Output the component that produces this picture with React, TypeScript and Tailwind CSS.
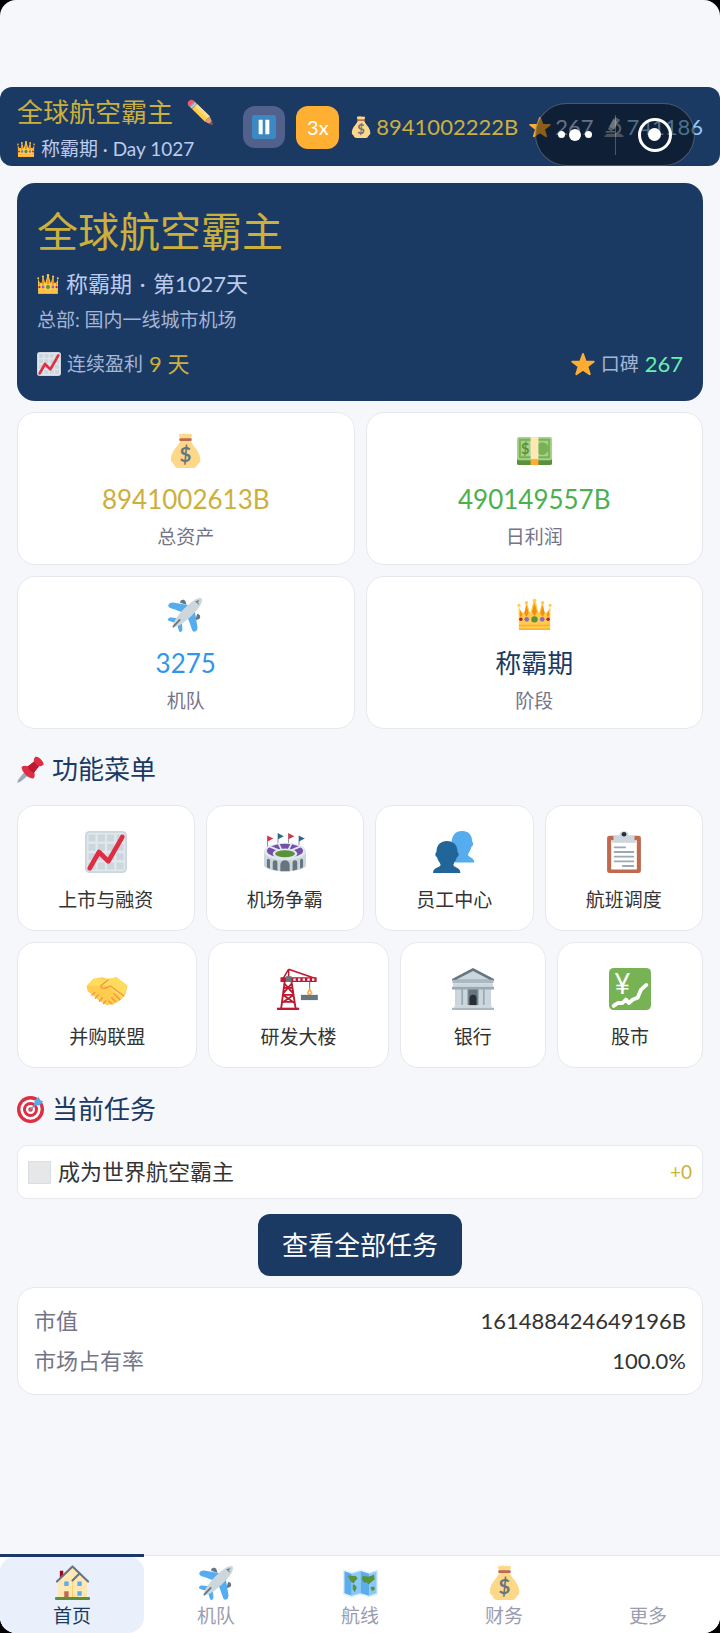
import type { ReactNode } from 'react'
import clsx from 'clsx'

const art: Record<string, ReactNode> = {
    crown: (
        <>
            <path fill="#FFCC4D" d="M1.500 8.500L5 19l3-1L9 7h1.500l3 10L17 4h2l3.500 13 3-10H27l1 11 3 1 3.500-10.500L34 34H2z" />
            <path fill="#FFCC4D" d="M2.500 16h31v10h-31z" />
            <path fill="#F4900C" d="M9.700 8l2.300 8.500-2.300 4-2.300-4zM18 6l2.600 9.500-2.600 4.500-2.600-4.500zM26.300 8l2.300 8.500-2.300 4-2.300-4zM3.500 13l2 5-1.500 3-1.300-3zM32.500 13l-2 5 1.500 3 1.300-3z" />
            <circle cx="18" cy="3.800" r="2" fill="#FFCC4D" />
            <circle cx="9.700" cy="6" r="1.800" fill="#FFCC4D" />
            <circle cx="26.300" cy="6" r="1.800" fill="#FFCC4D" />
            <circle cx="2" cy="8.500" r="1.600" fill="#FFCC4D" />
            <circle cx="34" cy="8.500" r="1.600" fill="#FFCC4D" />
            <path fill="#FFAC33" d="M2 28.500h32V30H2zM2 32.500h32V34H2z" />
            <circle cx="18" cy="23" r="3.300" fill="#5C913B" />
            <circle cx="10" cy="23" r="2.400" fill="#9266CC" />
            <circle cx="26" cy="23" r="2.400" fill="#9266CC" />
            <circle cx="4" cy="23" r="1.800" fill="#BE1931" />
            <circle cx="32" cy="23" r="1.800" fill="#BE1931" />
        </>
    ),
    pencil: (
        <>
            <path fill="#EA596E" d="M1.500 8.500C.5 6 1 4 2.800 2.500S7 .700 9 2l2.500 2.500-7 7z" />
            <path fill="#99AAB5" d="M3.500 10.500l7-7 3.500 3.500-7 7z" />
            <path fill="#CCD6DD" d="M5 12l7-7 .8.8-7 7z" />
            <path fill="#FFCC4D" d="M7 14l7-7 17.500 17L24.500 31z" />
            <path fill="#FFD983" d="M10.500 10.500L14 7l17.500 17-3.500 3.500z" />
            <path fill="#D99E82" d="M24.500 31l2-3 2-2 3-2 4 9.500c.3 1.500-.6 2.300-2 2z" />
            <path fill="#662113" d="M33.500 35.500l-3-1.200 4-4 1.100 3.200c.3 1.500-.6 2.300-2.100 2z" opacity=".65" />
        </>
    ),
    pause: (
        <>
            <rect width="36" height="36" rx="4" fill="#3B88C3" />
            <path fill="#fff" d="M10 7h6v22h-6zM20 7h6v22h-6z" />
        </>
    ),
    bag: (
        <>
            <path fill="#FDD888" d="M31.900 21.500C30.500 17 24 11.500 23.500 8h-11C12 11.500 5.500 17 4.100 21.500c-.9 2-1.300 4.500-1.100 7 .3 1.500 2.500 2.500 3 4 .6 2 1.500 3 4 3.500h16c2.500 0 3.500-1.500 4.500-3.500.6-1.500 2.500-2 2.700-4 .2-2.500-.4-5-1.300-7z" />
            <path fill="#FDD888" d="M11.500 1.500c1-1.500 2.500.3 3.500-.5s2-1 3 0 2.500-.8 3.500 0 2.500-.5 3 .5-.9 3.500-1.200 5H12.700c-.3-1.500-1.700-3.500-1.200-5z" />
            <rect x="11.500" y="5.500" width="13" height="2.800" rx="1.400" fill="#BF6952" />
            <text x="18" y="29.500" textAnchor="middle" fontSize="21" fontFamily="Lato, sans-serif" fontWeight="700" fill="#67757F">$</text>
        </>
    ),
    star: (
        <path fill="#FFAC33" stroke="#FFAC33" strokeWidth="3" strokeLinejoin="round" d="M18 3l4 11.200 12 .3-9.500 7.300L28 33.200l-10-6.800-10 6.800 3.500-11.400L2 14.500l12-.3z" />
    ),
    microscope: (
        <>
            <path fill="#8899A6" d="M4 30h28v3H4zM1 33h34v3H1z" />
            <path fill="none" stroke="#99AAB5" strokeWidth="4" d="M24 13c8 4 7 15-4 18" />
            <path fill="#CCD6DD" d="M17 3l9 5-8 15-9-5z" />
            <path fill="#99AAB5" d="M20 0l9 5-2 4-9-5zM9 18l7 4-2 4-7-4zM3 25h17v3H3z" />
        </>
    ),
    chart: (
        <>
            <rect width="36" height="36" rx="4" fill="#CCD6DD" />
            <rect x="1.500" y="1.500" width="33" height="33" rx="3" fill="#E1E8ED" />
            <path fill="#CCD6DD" d="M3 3h6v6H3zM11 3h6v6h-6zM19 3h6v6h-6zM27 3h6v6h-6zM3 11h6v6H3zM11 11h6v6h-6zM19 11h6v6h-6zM27 11h6v6h-6zM3 19h6v6H3zM11 19h6v6h-6zM19 19h6v6h-6zM27 19h6v6h-6zM3 27h6v6H3zM11 27h6v6h-6zM19 27h6v6h-6zM27 27h6v6h-6z" />
            <path fill="none" stroke="#DD2E44" strokeWidth="4" strokeLinecap="round" strokeLinejoin="round" d="M4 32l8-14 8 8L32 5" />
        </>
    ),
    cash: (
        <>
            <path fill="#5C913B" d="M0 26h36v5a2 2 0 01-2 2H2a2 2 0 01-2-2z" />
            <rect y="4" width="36" height="24" rx="2" fill="#A7D28B" />
            <path fill="#77B255" d="M2 6h32v20H2zM4 8v16h28V8z" fillRule="evenodd" />
            <circle cx="26" cy="16" r="6.500" fill="#77B255" />
            <text x="8.500" y="21.500" textAnchor="middle" fontSize="15" fontFamily="Lato, sans-serif" fontWeight="700" fill="#5C913B">$</text>
            <path fill="#FFE8B6" d="M14 4h8v23h-8z" />
            <path fill="#FFAC33" d="M14 27h8v6h-8z" />
        </>
    ),
    plane: (
        <>
            <path fill="#66757F" d="M12.500 6c-.5-3 4-4.500 5.500-1.500L19 8zM30 17.500c3-.5 4.500 4 1.500 5.500L28 24z" />
            <path fill="#55ACEE" d="M.5 8C1 6.500 3 5.500 5 5.700L25 9l-8 8C12 14 3 12 1 10.500.3 10 .200 9 .5 8zM28 35.500c1.500-.5 2.500-2.500 2.300-4.500L27 11l-8 8c3 5 5 14 6.500 16 .5.700 1.500.8 2.500.5zM0 23c.5-1.500 2-2 3.500-1.800L12 22l-3 5c-3-1-6-1.500-8-2.500-.8-.4-1.200-.8-1-1.500zM13 36c1.500-.5 2-2 1.800-3.500L14 24l-5 3c1 3 1.500 6 2.500 8 .4.800.8 1.200 1.500 1z" />
            <path fill="#CCD6DD" d="M6 30c-1.500-1.500 0-4.500 2-7.500C13 15 21 6.500 28 2.500c3-1.500 5.500-2 6.500-1s.5 3.500-1 6.500C29.500 15 21 23 13.500 28 10.500 30 7.500 31.500 6 30z" />
            <path fill="#66757F" d="M28 4.500c2-1 4-1 4.500-.5-1 .5-2 .8-2.500 1.500 1 .3 2 1.200 1.500 2.500-1-1.500-2-2.500-3.500-3.500z" />
            <path stroke="#66757F" strokeWidth="1.800" strokeLinecap="round" d="M5.500 30.500L12 23.500" />
        </>
    ),
    pin: (
        <>
            <path fill="#99AAB5" d="M0 36l2-5 10-12 5 5L5 34z" />
            <path fill="#DD2E44" stroke="#DD2E44" strokeWidth="2" strokeLinejoin="round" d="M7 15c3-2 6-1 8 0l9-7c-1-2-1-4 1-6 3-1 9 5 9.500 9-2 2-4 2-6 1l-7 9c1 2 2 5 0 8-6 0-14-8-14.500-14z" />
            <path fill="#BE1931" d="M14 14l9-7c1 3 3.500 5.500 6.500 6.500l-7 9c-3-1-7-4.500-8.500-8.500z" />
        </>
    ),
    stadium: (
        <>
            <path stroke="#8899A6" strokeWidth=".9" d="M3 4v10M12 2v10M21 2v10M30 4v10" />
            <path fill="#DD2E44" d="M3 4l5 2.500L3 9zM21 2l5 2.500L21 7z" />
            <path fill="#2A6797" d="M12 2l5 2.500L12 7zM30 4l5 2.500L30 9z" />
            <path fill="#CCD6DD" d="M0 17h36v13c-4 6-32 6-36 0z" />
            <ellipse cx="18" cy="17.500" rx="18" ry="7.500" fill="#E1E8ED" />
            <ellipse cx="18" cy="17" rx="15.500" ry="6" fill="#7450A8" />
            <path stroke="#E1E8ED" strokeWidth="1.500" d="M12 10l3 6M24 10l-3 6M4 13l10 4M32 13l-10 4" />
            <ellipse cx="18" cy="19.500" rx="10.500" ry="4.500" fill="#E1E8ED" />
            <ellipse cx="18" cy="19.500" rx="8.500" ry="3" fill="#5C913B" />
            <path fill="#66757F" d="M14 34.500V29a4 4 0 018 0v5.500zM7.500 33v-6a2 2 0 014 0v7zM24.500 34v-7a2 2 0 014 0v6zM2.500 31v-6a1.300 1.300 0 012.600 0v7.300zM30.900 32.300V25a1.300 1.300 0 012.600 0v6z" />
        </>
    ),
    people: (
        <>
            <path fill="#55ACEE" d="M25 0c5.500 0 8.500 3.500 8.500 8.500 0 .8 1 1 1 2.500s-1 2-1.500 2.500c-.7 3-2.500 5-3 6.500 0 3 5.500 2.500 5.500 7H19l-3-17C16 4 19 0 25 0z" />
            <path fill="#226699" d="M12 8.500c5.500 0 9 3.500 9 9 0 .8 1 1 1 2.500s-.7 2.300-1.500 2.500c-.7 3-3 5-3 6.500 0 2.500 6 2 6 7H0c0-5 6.500-4.500 6.500-7 0-1.500-2.500-3.500-3-6.500-.8-.2-1.500-1-1.500-2.500s1-1.700 1-2.500c0-5.500 3.500-9 9-9z" />
        </>
    ),
    clipboard: (
        <>
            <rect x="3.500" y="4" width="29" height="32" rx="2" fill="#C1694F" />
            <path fill="#fff" d="M7 8h22v25H7z" />
            <path fill="#CCD6DD" d="M9 4h5c0-5 8-5 8 0h5v4l2 2H7l2-2z" />
            <circle cx="18" cy="2.800" r="2" fill="#292F33" />
            <path stroke="#99AAB5" strokeWidth="1.600" strokeLinecap="round" d="M10 14h9M10 18h16M10 22h16M10 26h16M17 30h9" />
        </>
    ),
    handshake: (
        <>
            <path fill="#FFCC4D" d="M.5 15.500L6 9.500 14 8l5 1.500L26 8l9.500 7-1.500 7-3 4-2 2-3 1.500-3 2-2.500-.3-3 .8-6-4-5-4-5-4z" strokeLinejoin="round" />
            <path fill="#FFDC5D" d="M.5 15.500L7 9l9 1 4-1 6-1 9 6.500L33.500 21l-3.500 4L17 15z" />
            <path fill="none" stroke="#EF9645" strokeWidth="1.100" strokeLinecap="round" strokeLinejoin="round" d="M19 10l-6 5c-1 2 2 3 4 2l4-1.500L32.500 24M8 26l2.500-3M11.500 28.500l2.500-3M15 30.500l2-2.500M22 30.500l-2.500-2M25.500 29l-3.500-3.500M29 27L24 22M5 23.500l2.500-2.500" />
        </>
    ),
    crane: (
        <>
            <path fill="none" stroke="#BE1931" strokeWidth="1.300" d="M10 1L4 11M10 1l23 8M10 1v8" />
            <path fill="#BE1931" d="M3 8h9v4H3zM11 8h23v4H11z" />
            <path fill="#fff" d="M14 9h2v2h-2zM18 9h2v2h-2zM22 9h2v2h-2zM26 9h2v2h-2zM30 9h2v2h-2z" />
            <path fill="#66757F" d="M7.500 7h5v5h-5z" />
            <path fill="none" stroke="#BE1931" strokeWidth="1.600" d="M6.500 12L3.500 35M12.500 12l3.500 23M5.500 17h8M5 23h9.500M4 29h11.500M6 13l8 9M13 13l-8 9M5 23l10 7M14.500 23L4 30" />
            <path fill="#BE1931" d="M0 34h19v2H0z" />
            <path stroke="#66757F" strokeWidth=".9" d="M28 12v8" />
            <path fill="none" stroke="#FFAC33" strokeWidth="1.200" d="M28 18l-1.800 3.500L28 23l1.800-1.500z" />
            <path fill="#66757F" d="M20.500 23H35v4.500H20.500z" />
        </>
    ),
    bank: (
        <>
            <path fill="#66757F" d="M18 0l18 9.500V11H0V9.500z" />
            <path fill="#CCD6DD" d="M18 2.500L32.500 10h-29z" />
            <path fill="#AAB8C2" d="M.5 10h35v3H.5z" />
            <path fill="#CCD6DD" d="M1 13h34v3H1z" />
            <path fill="#99AAB5" d="M0 16h36v2.500H0zM3 18h30v14H3z" />
            <path fill="#CCD6DD" d="M3.500 18.500H8V32H3.500zM9.500 18.500H13V32H9.500zM23 18.500h3.500V32H23zM28 18.500h4.500V32H28z" />
            <path fill="#66757F" d="M14 18.500h8V32h-8z" />
            <path fill="#292F33" d="M15 32v-6a3 3 0 016 0v6z" />
            <path fill="#CCD6DD" d="M2 32h32v2H2z" />
            <path fill="#AAB8C2" d="M0 34h36v2H0z" />
        </>
    ),
    stock: (
        <>
            <rect width="36" height="36" rx="4" fill="#77B255" />
            <path fill="none" stroke="#fff" strokeWidth="3.300" strokeLinecap="round" strokeLinejoin="round" d="M4 32.500l3.500-2.500h4l3-3 2.500 3 3.500-3 4-1.500 3-7 4.500-4" />
            <text x="11.500" y="22" textAnchor="middle" fontSize="24" fontFamily="Lato, sans-serif" fill="#fff">¥</text>
        </>
    ),
    target: (
        <>
            <circle cx="18" cy="18" r="18" fill="#DD2E44" />
            <circle cx="18" cy="18" r="13.500" fill="#fff" />
            <circle cx="18" cy="18" r="10" fill="#DD2E44" />
            <circle cx="18" cy="18" r="6" fill="#fff" />
            <circle cx="18" cy="18" r="3" fill="#DD2E44" />
            <path stroke="#8899A6" strokeWidth="2" d="M17 19L27 9" />
            <path fill="#55ACEE" d="M23 12l.5-6L29 1l1.500 4.500L35 7l-5 5.500z" />
        </>
    ),
    box: (
        <>
            <rect width="36" height="36" rx="2" fill="#CCD6DD" />
            <rect x=".8" y=".8" width="34.400" height="34.400" rx="2" fill="#E6E7E8" />
        </>
    ),
    house: (
        <>
            <path fill="#A0041E" d="M5 6h3.500v9H5z" />
            <path fill="#FFE8B6" d="M3 16L18 2l15 14v17H3z" />
            <path fill="#FFCC4D" d="M18 17l-.5 16h1V17z" />
            <path fill="none" stroke="#66757F" strokeWidth="2.200" strokeLinecap="round" strokeLinejoin="round" d="M2 17L18 1.500 34 17M18 16l7-7" />
            <path fill="#5DADEC" d="M9.500 17h4.500v4.500H9.500zM23 17h4.500v4.500H23zM23 27h4.500v4.500H23z" />
            <path fill="#C1694F" d="M9.500 27H14v7H9.500z" />
            <rect y="33" width="36" height="3" rx="1" fill="#5C913B" />
        </>
    ),
    map: (
        <>
            <path fill="#DDF0FF" d="M0 4.500l9 3 9-3 9 3 9-3v26l-9 3-9-3-9 3-9-3z" />
            <path fill="#5DADEC" d="M1.500 6.500L9 9v22.500L1.500 29z" />
            <path fill="#88C9F9" d="M9 9l9-2.800V29l-9 2.500z" />
            <path fill="#5DADEC" d="M18 6.200L27 9v22.500L18 29z" />
            <path fill="#88C9F9" d="M27 9l7.500-2.500V29L27 31.500z" />
            <path fill="#5C913B" d="M5 11c3-1 5 1 8 0l2 3-3 3-1 2-3-2zM10 20c3 0 4 2 4 4l-2 4-2-3zM20 11l6 1 6-2 .5 5-4 3-2 2-2-2-3 0-2-3zM28 23l4-1 1 3-3 2z" />
        </>
    ),
}

function Emoji({ name, className }: { name: string; className: string }) {
    return (
        <svg viewBox="0 0 36 36" className={clsx('shrink-0', className)} aria-hidden="true">
            {art[name]}
        </svg>
    )
}

const stats = [
    { icon: 'bag', value: '8941002613B', label: '总资产', color: 'text-[#cdb03c]' },
    { icon: 'cash', value: '490149557B', label: '日利润', color: 'text-[#4caf50]' },
    { icon: 'plane', value: '3275', label: '机队', color: 'text-[#2f96ea]' },
    { icon: 'crown', value: '称霸期', label: '阶段', color: 'text-[#1b3a63]' },
]

const menuRows = [
    [
        { icon: 'chart', label: '上市与融资' },
        { icon: 'stadium', label: '机场争霸' },
        { icon: 'people', label: '员工中心' },
        { icon: 'clipboard', label: '航班调度' },
    ],
    [
        { icon: 'handshake', label: '并购联盟' },
        { icon: 'crane', label: '研发大楼' },
        { icon: 'bank', label: '银行' },
        { icon: 'stock', label: '股市' },
    ],
]

const tabs = [
    { icon: 'house', label: '首页' },
    { icon: 'plane', label: '机队' },
    { icon: 'map', label: '航线' },
    { icon: 'bag', label: '财务' },
    { icon: '', label: '更多' },
]

function SectionTitle({ icon, children }: { icon: string; children: ReactNode }) {
    return (
        <h2 className="flex items-center gap-2 text-[26px] leading-9 text-[#1b3a63]">
            <Emoji name={icon} className="size-[27px]" />
            {children}
        </h2>
    )
}

function TopBar() {
    return (
        <header className="relative flex items-center justify-between rounded-xl bg-[#1b3a63] px-[17px] pt-2 pb-[7px]">
            <div className="whitespace-nowrap">
                <h1 className="flex items-center gap-[14px] text-[26px] leading-[34px] text-[#cdb03c]">
                    全球航空霸主
                    <Emoji name="pencil" className="size-[26px]" />
                </h1>
                <p className="mt-[10px] flex items-center gap-[6px] text-[19px] leading-5 text-[#bccbee]">
                    <Emoji name="crown" className="size-[18px]" />
                    <span>称霸期 · Day 1027</span>
                </p>
            </div>
            <div className="flex items-center gap-[11px] text-[22px] leading-8 whitespace-nowrap">
                <button type="button" aria-label="暂停" className="flex size-[42px] items-center justify-center rounded-xl bg-[#51618b]">
                    <Emoji name="pause" className="size-6" />
                </button>
                <button type="button" className="flex size-[43px] items-center justify-center rounded-xl bg-[#ffb032] text-[20px] text-white">
                    3x
                </button>
                <span className="flex items-center gap-1 text-[#cdb03c]">
                    <Emoji name="bag" className="size-[22px]" />
                    8941002222B
                </span>
                <span className="flex items-center gap-1 text-[#bccbee]">
                    <Emoji name="star" className="size-[22px]" />
                    267
                </span>
                <span className="flex items-center gap-[2px] text-[#90caf9]">
                    <Emoji name="microscope" className="size-[20px]" />
                    741186
                </span>
            </div>
            <div className="absolute top-4 right-[25px] flex h-[63px] w-40 items-center rounded-full border border-white/25 bg-black/45">
                <button type="button" aria-label="更多操作" className="flex flex-1 items-center justify-center gap-1">
                    <span className="size-[7px] rounded-full bg-white" />
                    <span className="size-3 rounded-full bg-white" />
                    <span className="size-[7px] rounded-full bg-white" />
                </button>
                <span className="h-10 w-px bg-white/25" />
                <button type="button" aria-label="关闭" className="flex flex-1 items-center justify-center">
                    <span className="flex size-[34px] items-center justify-center rounded-full border-[3px] border-white">
                        <span className="size-[13px] rounded-full bg-white" />
                    </span>
                </button>
            </div>
        </header>
    )
}

function HeroCard() {
    return (
        <section className="rounded-[18px] bg-[#1b3a63] px-5 pt-5 pb-[21px] text-[#bccbee]">
            <h2 className="text-[41px] leading-[58px] text-[#cdb03c]">全球航空霸主</h2>
            <p className="mt-[7px] flex items-center gap-[7px] text-[22px] leading-8">
                <Emoji name="crown" className="size-[22px]" />
                <span>
                    称霸期<span className="mx-[2px]"> · </span>第1027天
                </span>
            </p>
            <p className="mt-1 text-[19px] leading-8 text-[#a4b5d8]">总部: 国内一线城市机场</p>
            <div className="mt-3 flex items-center justify-between text-[19px] leading-8 text-[#a4b5d8]">
                <span className="flex items-center gap-[6px]">
                    <Emoji name="chart" className="size-6" />
                    连续盈利
                    <span className="text-[22px] text-[#cdb03c]">9 天</span>
                </span>
                <span className="flex items-center gap-[6px]">
                    <Emoji name="star" className="size-6" />
                    口碑
                    <span className="text-[22px] text-[#69f0ae]">267</span>
                </span>
            </div>
        </section>
    )
}

export default function App() {
    return (
        <div className="min-h-screen bg-black font-[Lato,'Noto_Sans_CJK_SC',sans-serif]">
            <div className="flex min-h-screen flex-col overflow-hidden rounded-2xl bg-[#f5f7fb] pt-[87px]">
                <TopBar />
                <main className="flex flex-col px-[17px] pt-[17px] pb-8">
                    <HeroCard />

                    <div className="mt-[11px] grid grid-cols-2 gap-[11px]">
                        {stats.map((s) => (
                            <div key={s.label} className="flex flex-col items-center rounded-[18px] border border-[#e6e8ee] bg-white pt-5 pb-[11px]">
                                <Emoji name={s.icon} className="size-[35px]" />
                                <p className={clsx('mt-[13px] text-[26px] leading-9', s.color)}>{s.value}</p>
                                <p className="mt-1 text-[19px] leading-8 text-[#747489]">{s.label}</p>
                            </div>
                        ))}
                    </div>

                    <div className="mt-[22px]">
                        <SectionTitle icon="pin">功能菜单</SectionTitle>
                    </div>
                    <nav className="mt-[18px] flex flex-col gap-[11px]">
                        {menuRows.map((row) => (
                            <div key={row[0].label} className="flex gap-[11px]">
                                {row.map((item) => (
                                    <button
                                        key={item.label}
                                        type="button"
                                        className="flex flex-auto flex-col items-center rounded-[18px] border border-[#e6e8ee] bg-white pt-[25px] pb-[14px]"
                                    >
                                        <Emoji name={item.icon} className="size-[42px]" />
                                        <span className="mt-[11px] text-[19px] leading-8 text-[#333333]">{item.label}</span>
                                    </button>
                                ))}
                            </div>
                        ))}
                    </nav>

                    <div className="mt-[23px]">
                        <SectionTitle icon="target">当前任务</SectionTitle>
                    </div>
                    <div className="mt-[18px] flex items-center gap-[7px] rounded-[10px] border border-[#e6e8ee] bg-white px-[10px] py-[10px] text-[22px] leading-8 text-[#333333]">
                        <Emoji name="box" className="size-[23px]" />
                        <span>成为世界航空霸主</span>
                        <span className="ml-auto text-[19px] text-[#cdb03c]">+0</span>
                    </div>
                    <button type="button" className="mt-[15px] self-center rounded-xl bg-[#1b3a63] px-6 py-[13px] text-[26px] leading-9 text-white">
                        查看全部任务
                    </button>

                    <dl className="mt-[11px] grid grid-cols-2 gap-y-2 rounded-[18px] border border-[#e6e8ee] bg-white px-4 py-[17px] text-[22px] leading-8 text-[#333333]">
                        <dt className="text-[#747489]">市值</dt>
                        <dd className="text-right">161488424649196B</dd>
                        <dt className="text-[#747489]">市场占有率</dt>
                        <dd className="text-right">100.0%</dd>
                    </dl>
                </main>

                <nav className="mt-auto grid grid-cols-5 bg-white">
                    {tabs.map((tab, i) => (
                        <a
                            key={tab.label}
                            href="#"
                            className={clsx(
                                'relative flex flex-col items-center border-t pt-[9px] pb-px text-[19px] leading-8',
                                i === 0 ? 'border-[#1b3a63] text-[#1b3a63]' : 'border-[#e6e8ee] text-[#9a9db0]',
                            )}
                        >
                            {i === 0 && <span className="absolute inset-0 rounded-2xl bg-[#e9effb]" />}
                            {i === 0 && <span className="absolute inset-x-0 -top-[2px] h-[3px] bg-[#1b3a63]" />}
                            {tab.icon ? <Emoji name={tab.icon} className="relative size-[35px]" /> : <span className="size-[35px]" />}
                            <span className="relative">{tab.label}</span>
                        </a>
                    ))}
                </nav>
            </div>
        </div>
    )
}
